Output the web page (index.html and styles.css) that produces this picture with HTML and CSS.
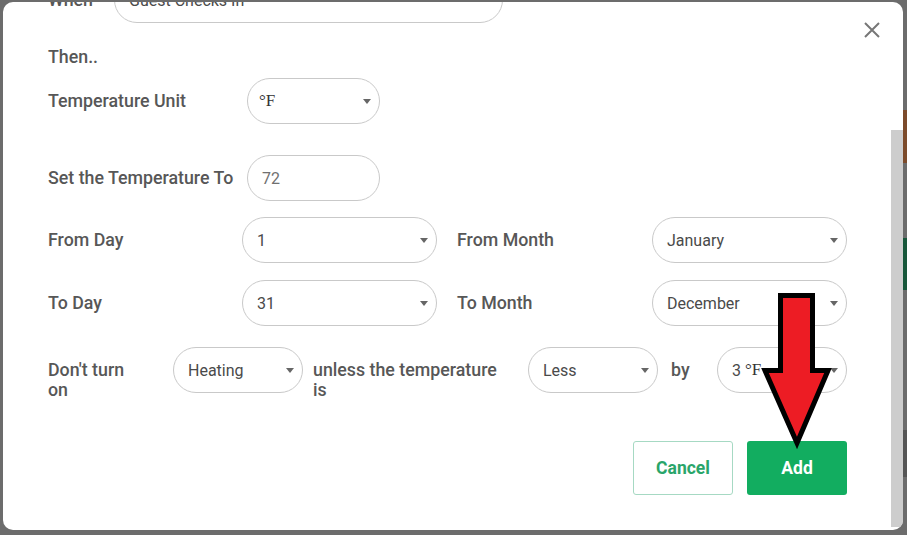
FILE: index.html
```html
<!DOCTYPE html>
<html>

<head>
    <title>Thermostat Rules</title>
    <link rel="stylesheet" href="styles.css">
</head>

<body>
    <!-- page behind the dialog, dimmed -->
    <div class="backdrop">
        <div class="edge edge-brown"></div>
        <div class="edge edge-green"></div>
        <div class="edge edge-dark"></div>
    </div>

    <div class="modal">
        <button class="close-btn" type="button" aria-label="Close">
            <svg width="18" height="18" viewBox="0 0 18 18">
                <path d="M2 2 L16 16 M16 2 L2 16" stroke="#777" stroke-width="2" fill="none" />
            </svg>
        </button>

        <div class="modal-body">
            <div class="row row-when">
                <div class="label label-when">When</div>
                <div class="pill pill-when">Guest Checks In</div>
            </div>

            <div class="then">Then..</div>

            <div class="row row-unit">
                <div class="label label-wide">Temperature Unit</div>
                <div class="pill pill-select pill-short"><span class="unit-text">°F</span><span class="caret"></span></div>
            </div>

            <div class="row row-temp">
                <div class="label label-wide">Set the Temperature To</div>
                <div class="pill pill-short pill-input">72</div>
            </div>

            <div class="row row-day">
                <div class="label label-col">From Day</div>
                <div class="pill pill-select pill-col">1<span class="caret"></span></div>
                <div class="label label-col label-right">From Month</div>
                <div class="pill pill-select pill-col">January<span class="caret"></span></div>
            </div>

            <div class="row row-day2">
                <div class="label label-col">To Day</div>
                <div class="pill pill-select pill-col">31<span class="caret"></span></div>
                <div class="label label-col label-right">To Month</div>
                <div class="pill pill-select pill-col">December<span class="caret"></span></div>
            </div>

            <div class="row row-rule">
                <div class="label label-rule">Don't turn on</div>
                <div class="pill pill-select pill-small">Heating<span class="caret"></span></div>
                <div class="label label-unless">unless the temperature is</div>
                <div class="pill pill-select pill-small">Less<span class="caret"></span></div>
                <div class="label label-by">by</div>
                <div class="pill pill-select pill-small">3&nbsp;<span class="unit-text">°F</span><span class="caret"></span></div>
            </div>

            <div class="actions">
                <button class="btn btn-cancel" type="button">Cancel</button>
                <button class="btn btn-add" type="button">Add</button>
            </div>
        </div>

        <div class="scroll-thumb"></div>
    </div>

    <!-- red pointer drawn over the dialog -->
    <svg class="pointer" width="907" height="535" viewBox="0 0 907 535">
        <polygon points="780.5,295.5 812.5,295.5 812.5,370.5 828,370.5 797,443 765,370.5 780.5,370.5"
            fill="#ed1c24" stroke="#000" stroke-width="5" stroke-linejoin="miter" />
    </svg>
</body>

</html>
```

FILE: styles.css
```css
html,
body {
    margin: 0;
    width: 907px;
    height: 535px;
    overflow: hidden;
}

body {
    background-color: #6c6c6c;
    font-family: Roboto, "Liberation Sans", sans-serif;
    position: relative;
}

.backdrop {
    position: absolute;
    inset: 0;
}

.edge {
    position: absolute;
    right: 0;
    width: 6px;
}

.edge-brown {
    top: 110px;
    height: 53px;
    background-color: #7c4b2b;
}

.edge-green {
    top: 238px;
    height: 52px;
    background-color: #17573a;
}

.edge-dark {
    top: 430px;
    height: 47px;
    background-color: #555;
}

.modal {
    position: relative;
    margin: 2px 0 0 3px;
    width: 900px;
    height: 528px;
    background-color: #fff;
    border-radius: 10px;
    overflow: hidden;
}

.close-btn {
    position: absolute;
    top: 19px;
    right: 22px;
    padding: 0;
    border: none;
    background: none;
    cursor: pointer;
}

.modal-body {
    padding: 0 56px 0 45px;
    margin-top: -25px;
}

.row {
    display: flex;
    align-items: center;
}

.label {
    color: #575757;
    font-size: 17.8px;
    font-weight: 500;
    line-height: 20px;
}

.pill {
    box-sizing: border-box;
    height: 46px;
    border: 1px solid #c9c9c9;
    border-radius: 23px;
    display: flex;
    align-items: center;
    padding-left: 14px;
    color: #4a4a4a;
    font-size: 16px;
    position: relative;
}

.pill-select .caret {
    position: absolute;
    right: 8px;
    top: 20px;
    width: 0;
    height: 0;
    border-left: 4px solid transparent;
    border-right: 4px solid transparent;
    border-top: 5px solid #666;
}

.unit-text {
    font-family: "Liberation Serif", serif;
    font-size: 17px;
    color: #333;
}

.label-when {
    width: 66px;
}

.pill-when {
    width: 389px;
    border-radius: 26px;
}

.then {
    margin-top: 24px;
    color: #575757;
    font-size: 17.8px;
    font-weight: 500;
    line-height: 20px;
}

.row-unit {
    margin-top: 11px;
}

.row-unit .pill {
    padding-left: 11px;
}

.row-temp {
    margin-top: 31px;
}

.row-day {
    margin-top: 16px;
}

.row-day2 {
    margin-top: 17px;
}

.label-wide {
    width: 199px;
}

.pill-short {
    width: 133px;
}

.pill-input {
    color: #707070;
}

.label-col {
    width: 194px;
}

.label-right {
    margin-left: 20px;
    width: 195px;
}

.pill-col {
    width: 195px;
}

.row-rule {
    margin-top: 21px;
    align-items: flex-start;
}

.row-rule .label {
    padding-top: 13px;
}

.label-rule {
    width: 80px;
    margin-right: 45px;
}

.pill-small {
    width: 130px;
}

.label-unless {
    width: 190px;
    margin-left: 10px;
    margin-right: 25px;
}

.label-by {
    width: 46px;
    margin-left: 13px;
}

.actions {
    margin-top: 41px;
    display: flex;
    justify-content: flex-end;
    gap: 14px;
}

.btn {
    width: 100px;
    height: 54px;
    border-radius: 3px;
    font-family: Roboto, "Liberation Sans", sans-serif;
    font-size: 17.5px;
    font-weight: 700;
    cursor: pointer;
}

.btn-cancel {
    background-color: #fff;
    border: 1px solid #a6d9c3;
    color: #2aa56a;
}

.btn-add {
    background-color: #12ad60;
    border: none;
    color: #fff;
}

.scroll-thumb {
    position: absolute;
    right: 0;
    top: 128px;
    bottom: 3px;
    width: 12px;
    background-color: #cdcdcd;
}

.pointer {
    position: absolute;
    left: 0;
    top: 0;
    pointer-events: none;
}
```
